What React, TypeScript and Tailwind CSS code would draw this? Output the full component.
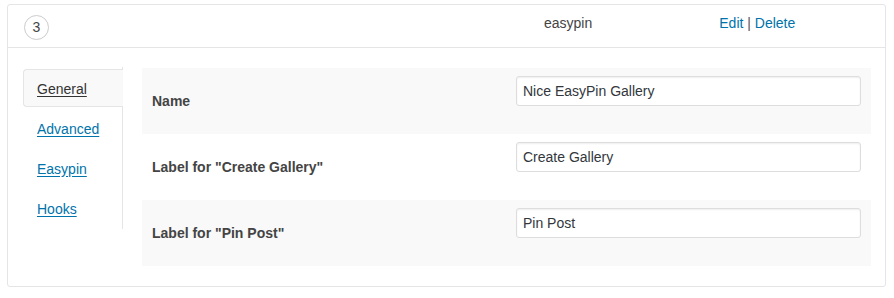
const tabs = ["General", "Advanced", "Easypin", "Hooks"];

const rows = [
    { label: "Name", value: "Nice EasyPin Gallery", shaded: true },
    { label: 'Label for "Create Gallery"', value: "Create Gallery", shaded: false },
    { label: 'Label for "Pin Post"', value: "Pin Post", shaded: true },
];

const App = () => {
    return (
        <div className="min-h-[298px] w-[894px] bg-white pt-[4px] pl-[7px] font-['Liberation_Sans',Arial,sans-serif] text-[14px] text-[#444]">
            <div className="w-[879px] h-[283px] rounded-[3px] border border-[#e5e5e5] bg-white">
                {/* header */}
                <div className="flex h-[43px] items-center border-b border-[#e5e5e5]">
                    <div className="ml-[16px] mt-[2px] flex h-[25px] w-[25px] items-center justify-center rounded-full border border-[#ccc] text-[14px] text-[#444]">
                        3
                    </div>
                    <p className="ml-[495px] -mt-[5px] text-[14px] text-[#444]">easypin</p>
                    <p className="ml-[127px] -mt-[5px] text-[14px] text-[#0073aa]">
                        <span>Edit</span>
                        <span className="text-[#555]"> | </span>
                        <span>Delete</span>
                    </p>
                </div>

                {/* body */}
                <div className="flex pt-[20px] pl-[15px]">
                    <div className="w-[100px] h-[162px] -mt-[1px] border-r border-[#e5e5e5] pt-[2px]">
                        {tabs.map((tab, i) => (
                            <div
                                key={tab}
                                className={
                                    i === 0
                                        ? "-mr-px flex h-[38px] items-center rounded-l-[4px] border border-r-0 border-[#e5e5e5] bg-[#f9f9f9] pl-[13px] pt-[3px]"
                                        : "flex h-[40px] items-center pl-[14px] pt-[4px]"
                                }
                            >
                                <a
                                    href="#"
                                    className={
                                        i === 0
                                            ? "text-[14px] text-[#333] underline underline-offset-2"
                                            : "text-[14px] text-[#0073aa] underline underline-offset-2"
                                    }
                                >
                                    {tab}
                                </a>
                            </div>
                        ))}
                    </div>

                    <div className="ml-[19px] w-[729px]">
                        {rows.map((row) => (
                            <div
                                key={row.label}
                                className={`flex h-[66px] ${row.shaded ? "bg-[#f9f9f9]" : "bg-white"}`}
                            >
                                <div className="w-[374px] pl-[10px] pt-[24px] text-[14px] font-bold leading-[18px] text-[#444]">
                                    {row.label}
                                </div>
                                <div className="pt-[8px]">
                                    <input
                                        readOnly
                                        value={row.value}
                                        className="h-[30px] w-[345px] rounded-[3px] border border-[#ddd] bg-white px-[6px] text-[14px] text-[#32373c] shadow-[inset_0_1px_2px_rgba(0,0,0,0.07)] outline-none"
                                    />
                                </div>
                            </div>
                        ))}
                    </div>
                </div>
            </div>
        </div>
    );
};

export default App;
